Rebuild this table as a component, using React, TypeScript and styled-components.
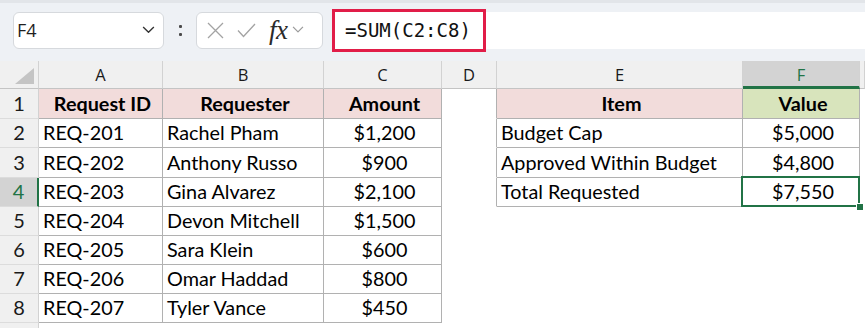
import React from 'react';
import styled, { createGlobalStyle, css } from 'styled-components';

const GlobalStyle = createGlobalStyle`
  html, body {
    margin: 0;
    padding: 0;
    background: #ffffff;
    overflow: hidden;
  }
`;

const GRID = '#b1b1b1';
const HEAD_LINE = '#d2d2d2';
const GREEN = '#217346';
const CELL_FONT = `Lato, 'Liberation Sans', sans-serif`;
const UI_FONT = `'Open Sans', 'Noto Sans', sans-serif`;

const Window = styled.div`
  width: 865px;
  height: 328px;
  overflow: hidden;
  background: #fff;
  display: flex;
  flex-direction: column;
`;

const Toolbar = styled.div`
  height: 61px;
  box-sizing: border-box;
  flex-shrink: 0;
  background: #eef1f5;
  border-top: 3px solid #e2e5e9;
  display: flex;
  align-items: center;
  padding: 0 0 4px 13px;
`;

const NameBox = styled.div`
  width: 151px;
  height: 37px;
  box-sizing: border-box;
  background: #fff;
  border: 1px solid #d6d9dd;
  border-radius: 6px;
  display: flex;
  align-items: center;
  justify-content: space-between;
  padding: 0 8px 0 3px;
  font-family: ${UI_FONT};
  font-size: 18px;
  color: #1f1f1f;
`;

const Dots = styled.div`
  width: 32px;
  display: flex;
  flex-direction: column;
  align-items: center;
  gap: 5px;
  span {
    width: 3px;
    height: 3px;
    border-radius: 1px;
    background: #4a4a4a;
  }
`;

const FormulaButtons = styled.div`
  width: 127px;
  height: 37px;
  box-sizing: border-box;
  background: #fff;
  border: 1px solid #d6d9dd;
  border-radius: 6px;
  display: flex;
  align-items: center;
  padding: 0 0 0 10px;
  gap: 13px;
`;

const Fx = styled.span`
  font-family: 'Liberation Serif', 'DejaVu Serif', serif;
  font-style: italic;
  font-size: 27px;
  line-height: 1;
  color: #2a2a2a;
  letter-spacing: -0.5px;
  margin-left: 0;
  display: flex;
  align-items: center;
  gap: 4px;
`;

const FormulaBar = styled.div`
  flex: 1;
  height: 37px;
  margin-left: 10px;
  background: #fff;
  display: flex;
  align-items: center;
`;

const Highlight = styled.div`
  height: 43px;
  width: 154px;
  box-sizing: border-box;
  margin: 0 0 0 -1px;
  border: 3px solid #e11d48;
  display: flex;
  align-items: center;
  padding-left: 10px;
  font-family: 'DejaVu Sans Mono', 'Liberation Mono', monospace;
  font-size: 19px;
  color: #111;
`;

const Sheet = styled.div`
  display: flex;
  flex-direction: column;
`;

const Row = styled.div<{ $h: number }>`
  display: flex;
  height: ${p => p.$h}px;
  flex-shrink: 0;
`;

const ColHead = styled.div<{ $w: number; $sel?: boolean }>`
  width: ${p => p.$w}px;
  flex-shrink: 0;
  box-sizing: border-box;
  background: ${p => (p.$sel ? '#d3d3d3' : '#f0f0f0')};
  border-right: 1px solid ${HEAD_LINE};
  border-bottom: ${p => (p.$sel ? `3px solid ${GREEN}` : '1px solid #c4c4c4')};
  display: flex;
  align-items: center;
  justify-content: center;
  padding-top: ${p => (p.$sel ? 2 : 0)}px;
  font-family: ${UI_FONT};
  font-size: 16.5px;
  color: ${p => (p.$sel ? GREEN : '#1a1a1a')};
`;

const Corner = styled.div`
  width: 39px;
  flex-shrink: 0;
  box-sizing: border-box;
  background: #f0f0f0;
  border-right: 1px solid ${HEAD_LINE};
  border-bottom: 1px solid #c4c4c4;
  display: flex;
  align-items: flex-end;
  justify-content: flex-end;
  padding: 0 4px 4px 0;
`;

const RowHead = styled.div<{ $sel?: boolean }>`
  width: 39px;
  flex-shrink: 0;
  box-sizing: border-box;
  background: ${p => (p.$sel ? '#d3d3d3' : '#f0f0f0')};
  border-right: ${p => (p.$sel ? `2px solid ${GREEN}` : `1px solid ${HEAD_LINE}`)};
  border-bottom: 1px solid #dcdcdc;
  display: flex;
  align-items: flex-end;
  justify-content: center;
  padding-bottom: 3px;
  font-family: ${CELL_FONT};
  font-size: 20px;
  color: ${p => (p.$sel ? GREEN : '#1a1a1a')};
`;

type Fill = 'none' | 'pink' | 'green';

const fills: Record<Fill, string> = {
  none: '#ffffff',
  pink: '#f2dcdb',
  green: '#d8e4bc',
};

const Cell = styled.div<{
  $w: number;
  $fill?: Fill;
  $bold?: boolean;
  $center?: boolean;
  $right?: boolean;
  $bottom?: boolean;
  $selected?: boolean;
}>`
  position: relative;
  width: ${p => p.$w}px;
  flex-shrink: 0;
  box-sizing: border-box;
  background: ${p => fills[p.$fill || 'none']};
  border-right: 1px solid ${p => (p.$right ? GRID : 'transparent')};
  border-bottom: 1px solid ${p => (p.$bottom ? GRID : 'transparent')};
  display: flex;
  align-items: flex-end;
  justify-content: ${p => (p.$center ? 'center' : 'flex-start')};
  padding: 0 0 3px 4px;
  font-family: ${CELL_FONT};
  font-size: 19.8px;
  font-weight: ${p => (p.$bold ? 700 : 400)};
  color: #000;
  white-space: nowrap;
  ${p =>
    p.$selected &&
    css`
      &::after {
        content: '';
        position: absolute;
        inset: -2px -1px -1px -2px;
        border: 2px solid ${GREEN};
      }
    `}
`;

const Handle = styled.span`
  position: absolute;
  right: -5px;
  bottom: -5px;
  width: 6px;
  height: 6px;
  background: ${GREEN};
  border: 1px solid #fff;
  z-index: 2;
`;

const COLS = [
  { key: 'A', w: 124 },
  { key: 'B', w: 161 },
  { key: 'C', w: 118 },
  { key: 'D', w: 55 },
  { key: 'E', w: 246 },
  { key: 'F', w: 117 },
];

const requests = [
  ['REQ-201', 'Rachel Pham', '$1,200'],
  ['REQ-202', 'Anthony Russo', '$900'],
  ['REQ-203', 'Gina Alvarez', '$2,100'],
  ['REQ-204', 'Devon Mitchell', '$1,500'],
  ['REQ-205', 'Sara Klein', '$600'],
  ['REQ-206', 'Omar Haddad', '$800'],
  ['REQ-207', 'Tyler Vance', '$450'],
];

const summary = [
  ['Budget Cap', '$5,000'],
  ['Approved Within Budget', '$4,800'],
  ['Total Requested', '$7,550'],
];

const ROW_H = [30, 29, 30, 29, 29, 29, 29, 29];

const Chevron = ({ color = '#333', w = 13 }: { color?: string; w?: number }) => (
  <svg width={w} height={w * 0.6} viewBox="0 0 13 8" fill="none">
    <polyline points="1,1 6.5,6.5 12,1" stroke={color} strokeWidth="1.4" strokeLinejoin="round" />
  </svg>
);

const App: React.FC = () => {
  return (
    <Window>
      <GlobalStyle />
      <Toolbar>
        <NameBox>
          <span>F4</span>
          <Chevron />
        </NameBox>
        <Dots>
          <span />
          <span />
        </Dots>
        <FormulaButtons>
          <svg width="17" height="17" viewBox="0 0 17 17">
            <path d="M1 1 L16 16 M16 1 L1 16" stroke="#a3a3a3" strokeWidth="1.3" />
          </svg>
          <svg width="19" height="15" viewBox="0 0 19 15" fill="none">
            <polyline points="1,7.5 6.5,13.5 18,1" stroke="#a3a3a3" strokeWidth="1.3" />
          </svg>
          <Fx>
            fx
            <Chevron color="#9a9a9a" w={12} />
          </Fx>
        </FormulaButtons>
        <FormulaBar>
          <Highlight>=SUM(C2:C8)</Highlight>
        </FormulaBar>
      </Toolbar>

      <Sheet>
        <Row $h={28}>
          <Corner>
            <svg width="19" height="16" viewBox="0 0 19 16">
              <polygon points="19,0 19,16 0,16" fill="#c4c4c4" />
            </svg>
          </Corner>
          {COLS.map(c => (
            <ColHead key={c.key} $w={c.w} $sel={c.key === 'F'}>
              {c.key}
            </ColHead>
          ))}
          <ColHead $w={5} />
        </Row>

        {ROW_H.map((h, i) => {
          const r = i + 1;
          const isHead = r === 1;
          const req = requests[i - 1];
          const sum = r >= 2 && r <= 4 ? summary[i - 1] : null;
          return (
            <Row key={r} $h={h}>
              <RowHead $sel={r === 4}>{r}</RowHead>
              {isHead ? (
                <>
                  <Cell $w={124} $fill="pink" $bold $center $right $bottom>Request ID</Cell>
                  <Cell $w={161} $fill="pink" $bold $center $right $bottom>Requester</Cell>
                  <Cell $w={118} $fill="pink" $bold $center $right $bottom>Amount</Cell>
                  <Cell $w={55} $right />
                  <Cell $w={246} $fill="pink" $bold $center $right $bottom>Item</Cell>
                  <Cell $w={117} $fill="green" $bold $center $right $bottom>Value</Cell>
                </>
              ) : (
                <>
                  <Cell $w={124} $right $bottom>{req[0]}</Cell>
                  <Cell $w={161} $right $bottom>{req[1]}</Cell>
                  <Cell $w={118} $center $right $bottom>{req[2]}</Cell>
                  <Cell $w={55} $right={!!sum} />
                  {sum ? (
                    <>
                      <Cell $w={246} $right $bottom>{sum[0]}</Cell>
                      <Cell $w={117} $center $right $bottom $selected={r === 4}>
                        {sum[1]}
                        {r === 4 && <Handle />}
                      </Cell>
                    </>
                  ) : (
                    <>
                      <Cell $w={246} />
                      <Cell $w={117} />
                    </>
                  )}
                </>
              )}
              <Cell $w={5} />
            </Row>
          );
        })}
        <Row $h={10}>
          <RowHead />
        </Row>
      </Sheet>
    </Window>
  );
};

export default App;
